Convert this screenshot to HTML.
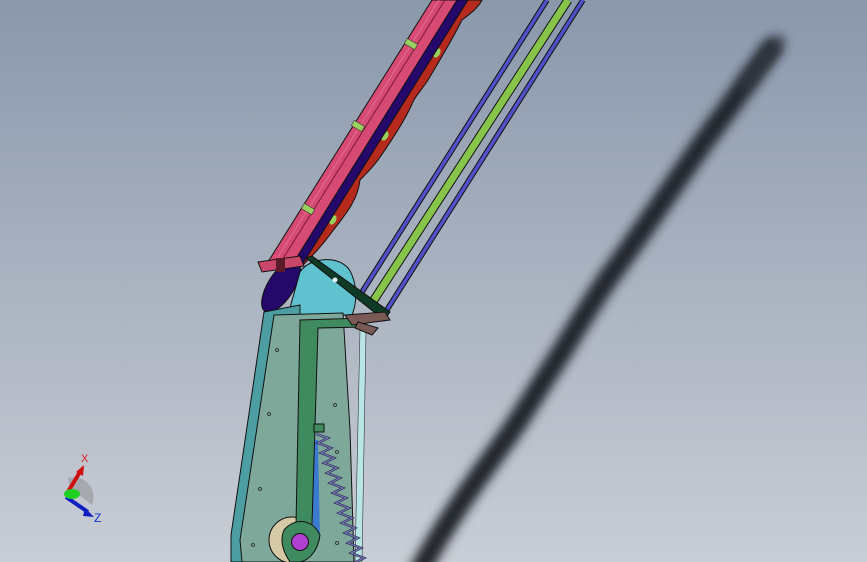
<!DOCTYPE html>
<html><head><meta charset="utf-8"><style>
html,body{margin:0;padding:0;width:867px;height:562px;overflow:hidden}
</style></head><body>
<svg width="867" height="562" viewBox="0 0 867 562" xmlns="http://www.w3.org/2000/svg">
<defs>
<linearGradient id="bg" x1="0" y1="0" x2="0" y2="1">
<stop offset="0" stop-color="#8a98ac"/><stop offset="1" stop-color="#c9cdd5"/>
</linearGradient>
<filter id="bl" x="-50%" y="-50%" width="200%" height="200%"><feGaussianBlur stdDeviation="5"/></filter>
</defs>
<rect width="867" height="562" fill="url(#bg)"/>
<path d="M772 48 C755 70 735 100 705 140 C670 190 640 235 607 280 C590 305 575 330 560 355 C540 385 520 420 505 440 C480 475 450 515 420 570" stroke="#24282e" stroke-width="21" fill="none" stroke-linecap="round" filter="url(#bl)"/>
<path d="M780 40 L745 85" stroke="#3a4048" stroke-width="12" fill="none" stroke-linecap="round" filter="url(#bl)" opacity="0.6"/>
<g stroke="#111" stroke-width="5.5">
<line x1="547" y1="0" x2="362" y2="292"/>
<line x1="583" y1="0" x2="383" y2="316"/>
<line x1="568" y1="0" x2="372" y2="303" stroke-width="9"/>
</g>
<g stroke-width="3.5">
<line x1="547" y1="0" x2="362" y2="292" stroke="#5050c8"/>
<line x1="583" y1="0" x2="383" y2="316" stroke="#5050c8"/>
<line x1="568" y1="0" x2="372" y2="303" stroke="#86c44a" stroke-width="7"/>
</g>
<path d="M467 0 L482 0 C478 8 470 14 462 20 C452 40 440 60 428 80 C420 92 414 98 412 104 C405 120 392 140 378 160 C372 168 364 176 360 180 C358 200 345 215 332 232 C322 246 312 256 304 264 L297 264 Z" fill="#b62a1e" stroke="#111" stroke-width="1"/>
<g fill="#9ad060"><ellipse cx="437" cy="53" rx="3" ry="5" transform="rotate(30 437 53)"/><ellipse cx="385" cy="136" rx="3" ry="5" transform="rotate(30 385 136)"/><ellipse cx="333" cy="220" rx="3" ry="5" transform="rotate(30 333 220)"/></g>
<polygon points="456,0 468,0 302,265 290,265" fill="#24086a" stroke="#111"/>
<polygon points="432,0 457,0 292,265 266,265" fill="#d64a74" stroke="#111"/>
<line x1="445" y1="0" x2="279" y2="265" stroke="#7a1a38" stroke-width="1"/>
<line x1="439" y1="0" x2="273" y2="265" stroke="#e0708f" stroke-width="1"/>
<g fill="#9ad060" stroke="#333" stroke-width=".6">
<rect x="405" y="41" width="12" height="6" transform="rotate(30 411 44)"/>
<rect x="352" y="123" width="12" height="6" transform="rotate(30 358 126)"/>
<rect x="302" y="206" width="12" height="6" transform="rotate(30 308 209)"/>
</g>
<ellipse cx="281" cy="286" rx="30" ry="13" transform="rotate(-58 281 286)" fill="#24086a" stroke="#111"/>
<path d="M288 315 L300 272 C310 256 345 254 352 275 C358 290 356 305 352 315 Z" fill="#5fc2ce" stroke="#111"/>
<polygon points="258,262 300,256 304,266 262,272" fill="#c9476a" stroke="#111"/>
<rect x="276" y="258" width="9" height="14" fill="#5a1a2a"/>
<polygon points="264,312 300,305 300,562 231,562 231,535" fill="#4c9ea3" stroke="#111"/>
<polygon points="285,320 300,320 302,520 285,515" fill="#62c4d0"/>
<polygon points="274,315 343,313 350,430 354,562 242,562 240,540" fill="#7ea99a" stroke="#111"/>
<polygon points="360,330 366,330 362,562 355,562" fill="#b8e6e6" stroke="#333" stroke-width=".6"/>
<g fill="none" stroke="#222" stroke-width=".8">
<circle cx="277" cy="350" r="1.5"/><circle cx="269" cy="414" r="1.5"/><circle cx="335" cy="405" r="1.5"/>
<circle cx="337" cy="452" r="1.5"/><circle cx="260" cy="489" r="1.5"/><circle cx="253" cy="545" r="1.5"/><circle cx="337" cy="543" r="1.5"/>
</g>
<polygon points="312,440 318,440 320,540 313,540" fill="#3a7ad0"/>
<circle cx="292" cy="540" r="23" fill="#d6c9a6" stroke="#111"/>
<polygon points="300,320 366,318 366,327 318,328 312,525 296,525" fill="#3f8a5e" stroke="#111"/>
<path d="M284 530 C294 518 312 518 320 535 C318 550 310 560 300 562 L290 562 C282 550 280 540 284 530Z" fill="#3f8a5e" stroke="#111"/>
<circle cx="300" cy="542" r="8.5" fill="#b040d0" stroke="#111"/>
<rect x="314" y="424" width="10" height="8" fill="#3f8a5e" stroke="#111"/>
<g fill="none">
<polyline points="316,434 328,438 318,443 331,448 321,453 334,458 324,463 337,468 327,473 340,478 330,483 343,488 333,493 346,498 336,503 349,508 339,513 352,518 342,523 355,528 345,533 358,538 348,543 361,548 351,553 364,558 354,563" stroke="#2a2a55" stroke-width="2.4"/>
<polyline points="316,434 328,438 318,443 331,448 321,453 334,458 324,463 337,468 327,473 340,478 330,483 343,488 333,493 346,498 336,503 349,508 339,513 352,518 342,523 355,528 345,533 358,538 348,543 361,548 351,553 364,558 354,563" stroke="#8080c0" stroke-width="1"/>
</g>
<polygon points="306,258 312,256 390,312 384,320" fill="#0f3a25" stroke="#111"/>
<circle cx="335" cy="280" r="2.5" fill="#e0f0f0"/>
<polygon points="345,315 385,312 390,320 352,325" fill="#7a5a55" stroke="#111"/>
<polygon points="358,322 378,328 372,335 355,328" fill="#7a5a55" stroke="#111"/>
<path d="M70 488 L68 478 A20 20 0 0 1 92 505 Z" fill="#9a9ca0" opacity="0.7"/>
<line x1="66" y1="495" x2="80" y2="472" stroke="#d01010" stroke-width="4"/>
<polygon points="84,465 76,472 83,476" fill="#d01010"/>
<line x1="66" y1="497" x2="88" y2="512" stroke="#1020c0" stroke-width="4"/>
<polygon points="94,517 85,508 83,516" fill="#1020c0"/>
<ellipse cx="72" cy="494" rx="8" ry="5" fill="#20d020"/>
<text x="81" y="462" font-family="Liberation Sans, sans-serif" font-size="11" fill="#e02020">X</text>
<text x="94" y="522" font-family="Liberation Sans, sans-serif" font-size="12" fill="#1030d0">Z</text>
</svg>
</body></html>
